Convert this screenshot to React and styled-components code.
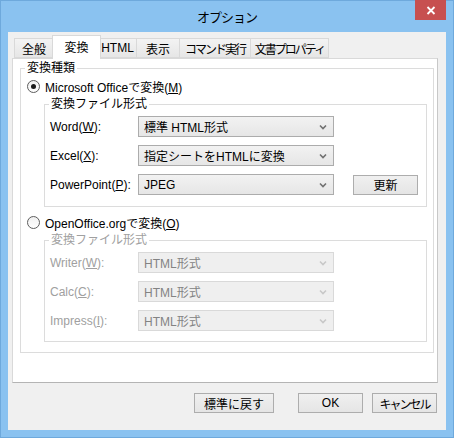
import React from 'react';
import styled, { createGlobalStyle } from 'styled-components';

const Global = createGlobalStyle`
	html, body { margin: 0; padding: 0; background: #8ac2f0; }
	body {
		font-family: "Liberation Sans", "Noto Sans CJK JP", sans-serif;
		font-size: 12px;
		color: #000;
	}
`

const Window = styled.div`
	width: 454px;
	height: 438px;
	box-sizing: border-box;
	background: #8ac2f0;
	border: 1px solid #6ea9dc;
	display: flex;
	flex-direction: column;
	padding: 0 7px 7px 7px;
`

const TitleBar = styled.div`
	height: 30px;
	display: flex;
	align-items: center;
	justify-content: center;
	position: relative;
	font-size: 13px;
	letter-spacing: -1px;
	padding-bottom: 1px;
`

const CloseButton = styled.div`
	position: absolute;
	right: 0;
	top: -1px;
	width: 31px;
	height: 20px;
	background: #c75050;
	color: #fff;
	display: flex;
	align-items: center;
	justify-content: center;
	svg { display: block; }
`

const Client = styled.div`
	flex: 1;
	background: #f0f0f0;
	display: flex;
	flex-direction: column;
	padding: 1px 8px 0 4px;
`

const TabStrip = styled.div`
	display: flex;
	align-items: flex-end;
	height: 25px;
	padding-left: 2px;
	position: relative;
	z-index: 1;
`

const Tab = styled.div`
	width: ${p => p.$w}px;
	height: ${p => (p.$active ? 24 : 20)}px;
	box-sizing: border-box;
	margin: 0 ${p => (p.$active ? -2 : 0)}px ${p => (p.$active ? -1 : 0)}px;
	border: 1px solid #d9d9d9;
	border-bottom: ${p => (p.$active ? 'none' : '1px solid #d9d9d9')};
	border-left: ${p => (p.$first || p.$active ? '1px solid #d9d9d9' : 'none')};
	background: ${p => (p.$active ? '#fff' : 'linear-gradient(#f3f3f3, #e6e6e6)')};
	display: flex;
	align-items: ${p => (p.$active ? 'flex-start' : 'center')};
	padding-top: ${p => (p.$active ? 2 : 0)}px;
	justify-content: center;
	position: relative;
	z-index: ${p => (p.$active ? 2 : 0)};
	white-space: nowrap;
	font-size: 12px;
	letter-spacing: ${p => p.$ls || 0}px;
`

const Panel = styled.div`
	height: 325px;
	box-sizing: border-box;
	background: #fff;
	border: 1px solid #d9d9d9;
	border-bottom-color: #b4b4b4;
	border-right-color: #c8c8c8;
	padding: 2px 3px 0 7px;
`

const Group = styled.fieldset`
	margin: 0 ${p => p.$mr || 0}px 0 ${p => p.$ml || 0}px;
	padding: 0;
	border: 1px solid #dcdcdc;
	min-width: 0;
	color: ${p => (p.$disabled ? '#a0a0a0' : '#000')};
`

const Legend = styled.legend`
	margin-left: 4px;
	padding: 0 2px;
	line-height: 14px;
`

const GroupBody = styled.div`
	display: flex;
	flex-direction: column;
	gap: ${p => p.$gap || 0}px;
	padding: ${p => p.$pad};
`

const RadioRow = styled.label`
	display: flex;
	align-items: center;
	gap: 5px;
	height: 16px;
	margin: ${p => p.$m};
`

const RadioDot = styled.span`
	width: 13px;
	height: 13px;
	box-sizing: border-box;
	border-radius: 50%;
	border: 1px solid #5d5d5d;
	background: linear-gradient(#f0f0f0, #fefefe);
	display: flex;
	align-items: center;
	justify-content: center;
	&::after {
		content: '';
		width: 5px;
		height: 5px;
		border-radius: 50%;
		background: ${p => (p.$on ? '#1a1a1a' : 'transparent')};
	}
`

const FieldRow = styled.div`
	display: flex;
	align-items: center;
	height: 21px;
	color: ${p => (p.$disabled ? '#a0a0a0' : '#000')};
`

const Label = styled.span`
	width: 88px;
	white-space: nowrap;
`

const Select = styled.div`
	width: 196px;
	height: 21px;
	box-sizing: border-box;
	border: 1px solid ${p => (p.$disabled ? '#d9d9d9' : '#acacac')};
	background: ${p => (p.$disabled ? '#efefef' : 'linear-gradient(#f2f2f2, #e6e6e6)')};
	color: ${p => (p.$disabled ? '#838383' : '#000')};
	display: flex;
	align-items: center;
	justify-content: space-between;
	padding: 0 6px 0 5px;
	white-space: nowrap;
`

const Chevron = ({ disabled }) => (
	<svg width="8" height="6" viewBox="0 0 8 6">
		<path d="M1 1.5 L4 4.5 L7 1.5" fill="none" stroke={disabled ? '#c8c8c8' : '#707070'} strokeWidth="1.6" />
	</svg>
)

const Button = styled.div`
	width: ${p => p.$w}px;
	height: 20px;
	box-sizing: border-box;
	border: 1px solid #adadad;
	background: linear-gradient(#f0f0f0, #e5e5e5);
	display: flex;
	align-items: center;
	justify-content: center;
	margin-left: ${p => p.$ml || 0}px;
	white-space: nowrap;
	letter-spacing: ${p => p.$ls || 0}px;
`

const Footer = styled.div`
	display: flex;
	justify-content: flex-end;
	padding: 10px 1px 0 0;
`

const tabs = [
	{ t: '全般', w: 40 },
	{ t: '変換', w: 49, active: true },
	{ t: 'HTML', w: 38 },
	{ t: '表示', w: 43 },
	{ t: 'コマンド実行', w: 71, ls: -2 },
	{ t: '文書プロパティ', w: 78, ls: -2 },
]

const Field = ({ label, mn, rest, value, disabled, children }) => (
	<FieldRow $disabled={disabled}>
		<Label>{label}(<u>{mn}</u>){rest}:</Label>
		<Select $disabled={disabled}>
			<span>{value}</span>
			<Chevron disabled={disabled} />
		</Select>
		{children}
	</FieldRow>
)

export default function App() {
	return (
		<>
			<Global />
			<Window>
				<TitleBar>
					オプション
					<CloseButton>
						<svg width="10" height="9" viewBox="0 0 10 9">
							<path d="M1.5 1 L8.5 8 M8.5 1 L1.5 8" stroke="#fff" strokeWidth="1.8" />
						</svg>
					</CloseButton>
				</TitleBar>
				<Client>
					<TabStrip>
						{tabs.map((tab, i) => (
							<Tab key={tab.t} $w={tab.w} $active={tab.active} $first={i === 0} $ls={tab.ls}>{tab.t}</Tab>
						))}
					</TabStrip>
					<Panel>
						<Group>
							<Legend>変換種類</Legend>
							<GroupBody $pad="3px 6px 10px 6px">
								<RadioRow $m="0 0 3px 0">
									<RadioDot $on />
									<span>Microsoft Officeで変換(<u>M</u>)</span>
								</RadioRow>
								<Group $ml={17} $mr={0}>
									<Legend>変換ファイル形式</Legend>
									<GroupBody $gap={8} $pad="5px 0 11px 5px">
										<Field label="Word" mn="W" value="標準 HTML形式" />
										<Field label="Excel" mn="X" value="指定シートをHTMLに変換" />
										<Field label="PowerPoint" mn="P" value="JPEG">
											<Button $w={65} $ml={19}>更新</Button>
										</Field>
									</GroupBody>
								</Group>
								<RadioRow $m="7px 0 3px 0">
									<RadioDot />
									<span>OpenOffice.orgで変換(<u>O</u>)</span>
								</RadioRow>
								<Group $ml={17} $disabled>
									<Legend>変換ファイル形式</Legend>
									<GroupBody $gap={8} $pad="5px 0 10px 5px">
										<Field label="Writer" mn="W" value="HTML形式" disabled />
										<Field label="Calc" mn="C" value="HTML形式" disabled />
										<Field label="Impress" mn="I" value="HTML形式" disabled />
									</GroupBody>
								</Group>
							</GroupBody>
						</Group>
					</Panel>
					<Footer>
						<Button $w={80}>標準に戻す</Button>
						<Button $w={65} $ml={24}>OK</Button>
						<Button $w={65} $ml={9} $ls={-2}>キャンセル</Button>
					</Footer>
				</Client>
			</Window>
		</>
	)
}
